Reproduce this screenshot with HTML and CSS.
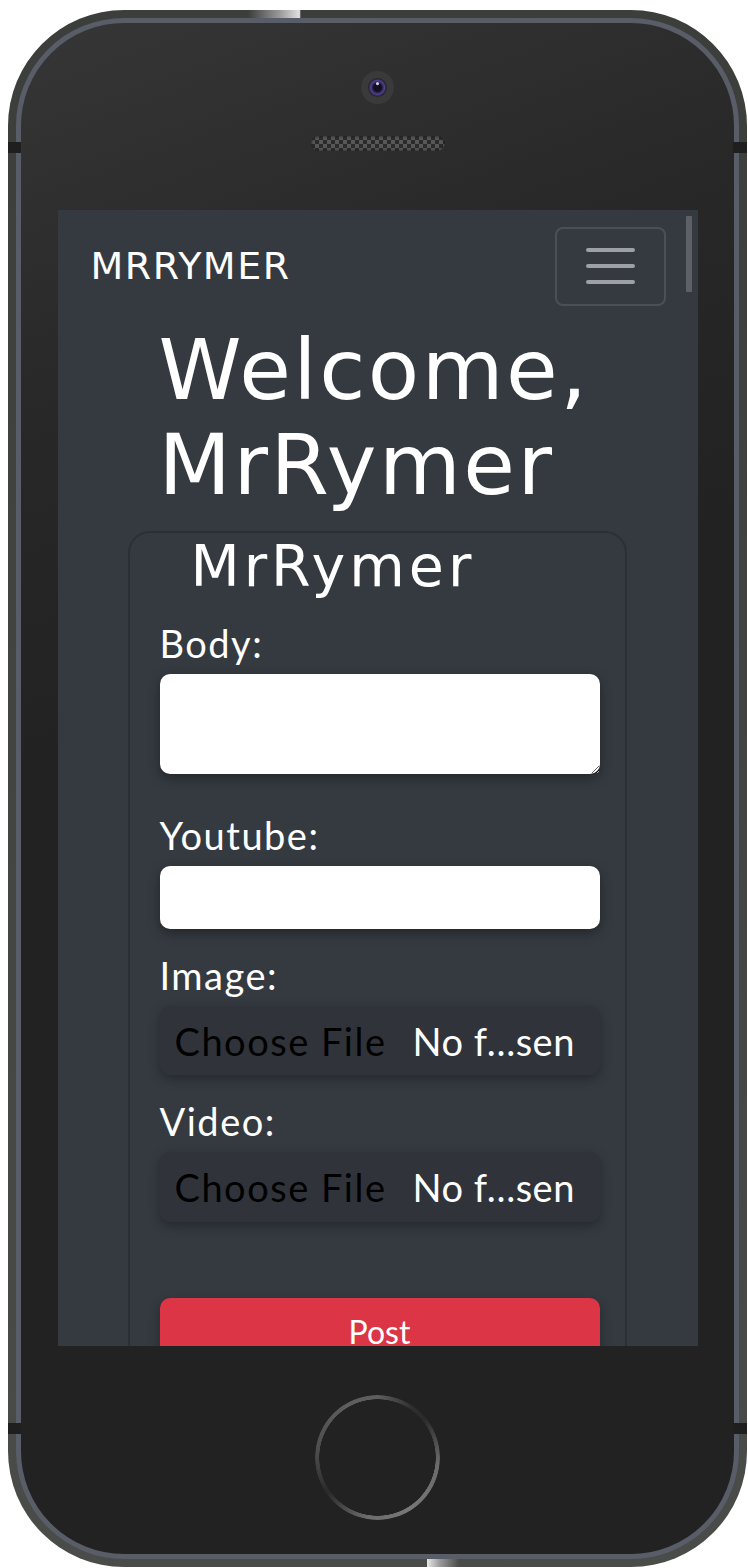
FILE: index.html
```html
<!DOCTYPE html>
<html lang="en">
<head>
<meta charset="utf-8">
<title>MrRymer</title>
<link rel="stylesheet" href="styles.css">
</head>
<body>
<div class="phone">
  <span class="power"></span>
  <span class="side side-mute"></span>
  <span class="side side-up"></span>
  <span class="side side-down"></span>
  <span class="antenna antenna-lt"></span>
  <span class="antenna antenna-rt"></span>
  <span class="antenna antenna-lb"></span>
  <span class="antenna antenna-rb"></span>
  <span class="shine shine-top"></span>
  <span class="shine shine-bottom"></span>
  <div class="bezel">
    <div class="camera"><div class="lens"></div></div>
    <div class="speaker"></div>
    <div class="screen">
      <nav class="navbar">
        <span class="brand">MRRYMER</span>
        <button class="toggler" type="button" aria-label="Toggle navigation">
          <span class="bar"></span><span class="bar"></span><span class="bar"></span>
        </button>
      </nav>
      <h1 class="welcome">Welcome,<br>MrRymer</h1>
      <div class="card">
        <h2 class="card-title">MrRymer</h2>
        <form class="post-form">
          <div class="group group-text">
            <label class="label" for="body">Body:</label>
            <textarea class="textarea" id="body"></textarea>
          </div>
          <div class="group">
            <label class="label" for="yt">Youtube:</label>
            <input class="input" id="yt" type="text">
          </div>
          <div class="group">
            <label class="label">Image:</label>
            <div class="file"><span class="file-btn">Choose File</span><span class="file-name">No f…sen</span></div>
          </div>
          <div class="group group-last">
            <label class="label">Video:</label>
            <div class="file file-video"><span class="file-btn">Choose File</span><span class="file-name">No f…sen</span></div>
          </div>
          <button class="btn-post" type="button">Post</button>
        </form>
      </div>
      <div class="thumb"></div>
    </div>
    <div class="home"></div>
  </div>
</div>
</body>
</html>
```
FILE: styles.css
```css
html, body {
  margin: 0;
  padding: 0;
  background: #ffffff;
}

body {
  font-family: "Lato", "Open Sans", sans-serif;
}

.phone {
  position: relative;
  box-sizing: border-box;
  margin: 10px 0 0 8px;
  width: 739px;
  height: 1557px;
  padding: 8px;
  border-radius: 116px;
  background: linear-gradient(180deg, #3b3e3b 0%, #434642 60%, #4a4c49 100%);
}

.power {
  position: absolute;
  z-index: -1;
  top: -10px;
  left: 481px;
  width: 118px;
  height: 12px;
  border-radius: 3px 3px 0 0;
  background: linear-gradient(180deg, #8d8d93, #78787e);
}

.side {
  position: absolute;
  z-index: -1;
  left: -7px;
  width: 9px;
  border-radius: 3px 0 0 3px;
  background: linear-gradient(90deg, #7a7980, #86858c);
}
.side-mute { top: 201px; height: 67px; }
.side-up { top: 346px; height: 55px; }
.side-down { top: 477px; height: 55px; }

.antenna {
  position: absolute;
  height: 11px;
  background: #1f1f1f;
}
.antenna-lt { left: 0; top: 132px; width: 13px; }
.antenna-rt { right: 0; top: 132px; width: 14px; }
.antenna-lb { left: 0; top: 1413px; width: 13px; }
.antenna-rb { right: 0; top: 1413px; width: 14px; }

.shine {
  position: absolute;
  height: 8px;
}
.shine-top {
  top: 0;
  left: 240px;
  width: 53px;
  background: linear-gradient(90deg, rgba(200, 200, 200, 0) 0%, #9a9a9a 60%, #e0e0e0 97%, #2e312e 100%);
}
.shine-bottom {
  bottom: 0;
  left: 419px;
  width: 32px;
  background: linear-gradient(90deg, #e8e8e8 0%, #9a9a9a 40%, rgba(60, 64, 60, 0) 100%);
}

.bezel {
  box-sizing: border-box;
  height: 100%;
  border: 5px solid #585d68;
  border-radius: 108px;
  background: linear-gradient(160deg, #363636 0%, #282828 22%, #222222 42%, #222222 100%);
  display: flex;
  flex-direction: column;
  align-items: center;
}

.camera {
  flex: none;
  margin-top: 48px;
  width: 33px;
  height: 33px;
  border-radius: 50%;
  background: #3a3a3a;
  display: flex;
  align-items: center;
  justify-content: center;
}

.lens {
  width: 19px;
  height: 19px;
  border-radius: 50%;
  background:
    radial-gradient(circle at 50% 30%, rgba(230, 225, 255, 0.9) 0 1px, rgba(230, 225, 255, 0) 2px),
    radial-gradient(circle at 50% 50%, #120f22 0 4px, #2c2450 5px, #4e4188 7px, #2a2440 8.5px, #262626 9.5px);
}

.speaker {
  flex: none;
  margin-top: 32px;
  width: 134px;
  height: 15px;
  border-radius: 8px;
  background: repeating-conic-gradient(#575757 0 25%, #2b2b2b 0 50%) 0 0 / 8px 8px;
  box-shadow: inset 0 0 3px #1a1a1a;
}

.screen {
  flex: none;
  position: relative;
  overflow: hidden;
  margin-top: 59px;
  width: 640px;
  height: 1136px;
  background: #343a40;
  color: #ffffff;
}

.navbar {
  box-sizing: border-box;
  height: 112px;
  padding: 16px 32px 16px 33px;
  display: flex;
  align-items: center;
  justify-content: space-between;
}

.brand {
  font-family: "DejaVu Sans", sans-serif;
  font-size: 38px;
  line-height: 44px;
  letter-spacing: 1.5px;
  color: #ffffff;
}

.toggler {
  box-sizing: border-box;
  width: 111px;
  height: 79px;
  padding: 0;
  border: 2px solid #4a5056;
  border-radius: 8px;
  background: transparent;
  display: flex;
  flex-direction: column;
  align-items: center;
  justify-content: center;
  gap: 12px;
}

.bar {
  display: block;
  width: 49px;
  height: 4px;
  border-radius: 2px;
  background: #9da0a4;
}

.welcome {
  margin: 1px 0 0;
  padding-left: 101px;
  font-family: "DejaVu Sans", sans-serif;
  font-weight: normal;
  font-size: 84px;
  line-height: 95px;
  letter-spacing: 2.5px;
  color: #ffffff;
}

.card {
  box-sizing: border-box;
  margin: 18px 0 0 70px;
  width: 499px;
  height: 1000px;
  border: 2px solid #2b3035;
  border-radius: 22px;
}

.card-title {
  margin: 0;
  padding: 3px 0 0 61px;
  font-family: "DejaVu Sans", sans-serif;
  font-weight: normal;
  font-size: 57px;
  line-height: 60px;
  letter-spacing: 4px;
  color: #ffffff;
}

.post-form {
  margin-top: 24px;
  padding: 0 25px 0 30px;
}

.group {
  margin-bottom: 23px;
}
.group-text {
  margin-bottom: 38px;
}
.group-last {
  margin-bottom: 76px;
}

.label {
  display: block;
  margin-bottom: 8px;
  font-size: 38px;
  line-height: 46px;
  letter-spacing: 1.5px;
  color: #ffffff;
}

.textarea,
.input {
  display: block;
  box-sizing: border-box;
  width: 440px;
  margin: 0;
  border: none;
  border-radius: 10px;
  background: #ffffff;
  box-shadow: 0 4px 12px rgba(0, 0, 0, 0.35);
  font-family: "Lato", sans-serif;
  font-size: 32px;
}
.textarea {
  height: 100px;
}
.input {
  height: 63px;
}

.file {
  box-sizing: border-box;
  width: 440px;
  height: 69px;
  padding-left: 15px;
  border-radius: 10px;
  background: #30343a;
  box-shadow: 0 4px 12px rgba(0, 0, 0, 0.3);
  display: flex;
  align-items: center;
  gap: 26px;
  font-size: 38px;
  line-height: 46px;
  letter-spacing: 1.5px;
  white-space: nowrap;
}
.file-video {
  height: 70px;
}
.file-btn {
  color: #000000;
}
.file-name {
  color: #ffffff;
  letter-spacing: 0.5px;
}

.btn-post {
  display: block;
  box-sizing: border-box;
  width: 440px;
  padding: 10px 0 18px;
  border: none;
  border-radius: 10px;
  background: #dc3545;
  box-shadow: 0 4px 12px rgba(0, 0, 0, 0.3);
  color: #ffffff;
  font-family: "Lato", sans-serif;
  font-size: 32px;
  line-height: 48px;
  text-align: center;
}

.thumb {
  position: absolute;
  left: 628px;
  top: 6px;
  width: 6px;
  height: 76px;
  border-radius: 1px;
  background: #5d6166;
}

.home {
  flex: none;
  margin-top: 49px;
  width: 125px;
  height: 125px;
  border-radius: 50%;
  background: conic-gradient(#5e5e5e 0deg, #2e2e2e 35deg, #2a2a2a 50deg, #6a6a6a 95deg, #777777 150deg, #6c6c6c 190deg, #2a2a2a 235deg, #4c4c4c 275deg, #5e5e5e 330deg, #5e5e5e 360deg);
  -webkit-mask: radial-gradient(circle closest-side, transparent 58px, #000 58.5px);
  mask: radial-gradient(circle closest-side, transparent 58px, #000 58.5px);
}
```
